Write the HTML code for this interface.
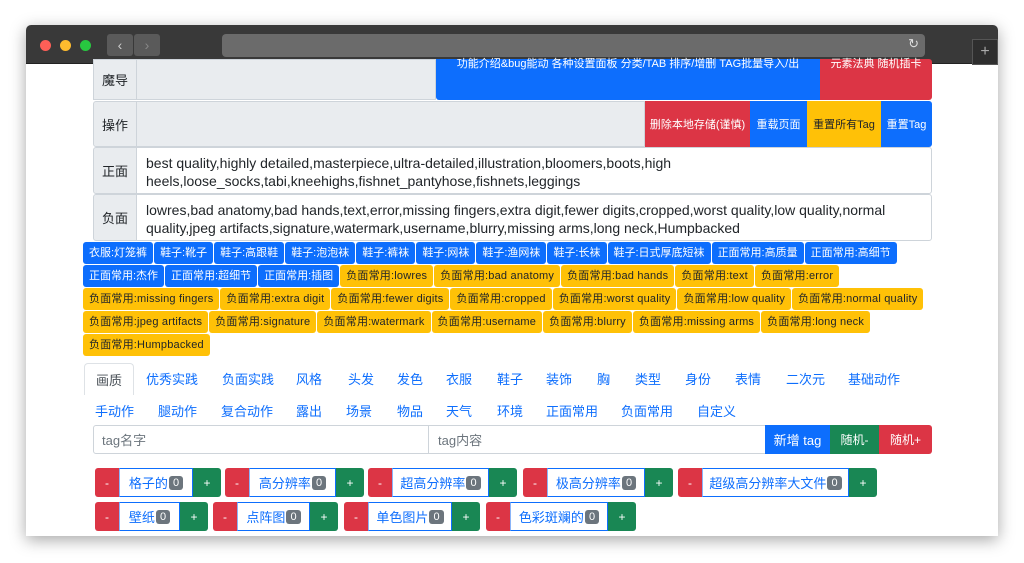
<!DOCTYPE html>
<html><head><meta charset="utf-8"><style>
*{box-sizing:border-box;margin:0;padding:0}
body{width:1024px;height:563px;background:#fff;font-family:"Liberation Sans","Noto Sans CJK SC",sans-serif;position:relative;overflow:hidden}
.win{position:absolute;left:26px;top:25px;width:972px;height:511px;background:#fff;box-shadow:0 4px 16px rgba(0,0,0,.35);border-radius:5px 5px 0 0;overflow:hidden}
.bar{position:absolute;left:0;top:0;width:972px;height:39px;background:#393939;border-bottom:1px solid #222}
.dot{position:absolute;top:15px;width:11px;height:11px;border-radius:50%}
.nb{position:absolute;top:9px;width:26px;height:22px;background:#5a5a5a;border-radius:3px;color:#ccc;font-size:14px;text-align:center;line-height:22px}
.url{position:absolute;left:196px;top:9px;width:703px;height:23px;background:#6b6b6b;border-radius:4px}
.c{position:absolute;left:0;top:40px;width:972px;height:471px}
.a{position:absolute}
.lab{position:absolute;background:#e9ecef;border:1px solid #ced4da;color:#212529;font-size:13px;display:flex;align-items:center;justify-content:center}
.ta{position:absolute;border:1px solid #ced4da;font-size:14px;color:#212529;padding:6px 9px;line-height:23px}
.btn{position:absolute;color:#fff;font-size:11px;display:flex;align-items:center;justify-content:center;white-space:nowrap}
.tags{position:absolute;left:57px;top:217px;width:850px;display:flex;flex-wrap:wrap}
.t{font-size:11px;height:22px;line-height:22px;padding:0 6px;margin:0 1px 1px 0;border-radius:3px;color:#fff;background:#0d6efd;white-space:nowrap}
.y{background:#ffc107;color:#212529;letter-spacing:.2px}
.tr span{position:absolute;white-space:nowrap;font-size:13px;color:#0d6efd}
.g{position:absolute;height:29px;display:flex}
.g .m{width:24px;background:#dc3545;color:#fff;font-size:12px;display:flex;align-items:center;justify-content:center;border-radius:3px 0 0 3px}
.g .p{width:28px;background:#198754;color:#fff;font-size:12px;display:flex;align-items:center;justify-content:center;border-radius:0 3px 3px 0}
.g .n{border:1px solid #0d6efd;border-left-color:#8ab4f8;color:#0d6efd;font-size:13px;display:flex;align-items:center;justify-content:center;background:#fff;white-space:nowrap}
.bd{background:#6c757d;color:#fff;font-size:11px;border-radius:3px;padding:1px 4px;margin-left:1px}
</style></head><body>
<div class="win">
<div class="bar">
<div class="dot" style="left:14px;background:#fe5f57"></div>
<div class="dot" style="left:34px;background:#febc2e"></div>
<div class="dot" style="left:54px;background:#28c840"></div>
<div class="nb" style="left:81px">&#8249;</div>
<div class="nb" style="left:108px;color:#888">&#8250;</div>
<div class="url"><span style="position:absolute;right:6px;top:2px;color:#ddd;font-size:13px">&#8635;</span></div>
<div style="position:absolute;left:946px;top:14px;width:26px;height:26px;background:#2e2e2e;border:1px solid #555;color:#aaa;font-size:16px;text-align:center;line-height:24px">+</div>
</div>
<div class="c">
<div class="lab" style="left:67px;top:-6px;width:44px;height:41px">魔导</div>
<div class="ta" style="left:110px;top:-6px;width:300px;height:41px;background:#e9ecef"></div>
<div class="btn" style="left:410px;top:-6px;width:384px;height:41px;background:#0d6efd;align-items:flex-start;justify-content:space-around;border-radius:0 0 0 3px;font-size:11px;line-height:10px">功能介绍&amp;bug能动 各种设置面板 分类/TAB 排序/增删 TAG批量导入/出</div>
<div class="btn" style="left:794px;top:-6px;width:112px;height:41px;background:#dc3545;align-items:flex-start;line-height:10px;border-radius:0 3px 3px 0">元素法典 随机插卡</div>
<div class="lab" style="left:67px;top:36px;width:44px;height:46px;border-radius:3px 0 0 3px">操作</div>
<div class="ta" style="left:110px;top:36px;width:509px;height:46px;background:#e9ecef"></div>
<div class="btn" style="left:619px;top:36px;width:105px;height:46px;background:#dc3545">删除本地存储(谨慎)</div>
<div class="btn" style="left:724px;top:36px;width:57px;height:46px;background:#0d6efd">重载页面</div>
<div class="btn" style="left:781px;top:36px;width:74px;height:46px;background:#ffc107;color:#212529">重置所有Tag</div>
<div class="btn" style="left:855px;top:36px;width:51px;height:46px;background:#0d6efd;border-radius:0 3px 3px 0">重置Tag</div>
<div class="lab" style="left:67px;top:82px;width:44px;height:47px;border-radius:3px 0 0 3px">正面</div>
<div class="ta" style="left:110px;top:82px;width:796px;height:47px;border-radius:0 3px 3px 0;padding:6px 9px;line-height:18px">best quality,highly detailed,masterpiece,ultra-detailed,illustration,bloomers,boots,high<br>heels,loose_socks,tabi,kneehighs,fishnet_pantyhose,fishnets,leggings</div>
<div class="lab" style="left:67px;top:129px;width:44px;height:47px;border-radius:3px 0 0 3px">负面</div>
<div class="ta" style="left:110px;top:129px;width:796px;height:47px;border-radius:0 3px 3px 0;padding:6px 9px;line-height:18px;white-space:nowrap">lowres,bad anatomy,bad hands,text,error,missing fingers,extra digit,fewer digits,cropped,worst quality,low quality,normal<br>quality,jpeg artifacts,signature,watermark,username,blurry,missing arms,long neck,Humpbacked</div>
<div class="tags" style="top:177px">
<span class="t">衣服:灯笼裤</span><span class="t">鞋子:靴子</span><span class="t">鞋子:高跟鞋</span><span class="t">鞋子:泡泡袜</span><span class="t">鞋子:裤袜</span><span class="t">鞋子:网袜</span><span class="t">鞋子:渔网袜</span><span class="t">鞋子:长袜</span><span class="t">鞋子:日式厚底短袜</span><span class="t">正面常用:高质量</span><span class="t">正面常用:高细节</span>
<span class="t">正面常用:杰作</span><span class="t">正面常用:超细节</span><span class="t">正面常用:插图</span><span class="t y">负面常用:lowres</span><span class="t y">负面常用:bad anatomy</span><span class="t y">负面常用:bad hands</span><span class="t y">负面常用:text</span><span class="t y">负面常用:error</span>
<span class="t y">负面常用:missing fingers</span><span class="t y">负面常用:extra digit</span><span class="t y">负面常用:fewer digits</span><span class="t y">负面常用:cropped</span><span class="t y">负面常用:worst quality</span><span class="t y">负面常用:low quality</span><span class="t y">负面常用:normal quality</span>
<span class="t y">负面常用:jpeg artifacts</span><span class="t y">负面常用:signature</span><span class="t y">负面常用:watermark</span><span class="t y">负面常用:username</span><span class="t y">负面常用:blurry</span><span class="t y">负面常用:missing arms</span><span class="t y">负面常用:long neck</span>
<span class="t y">负面常用:Humpbacked</span>
</div>
<div class="a" style="left:58px;top:298px;width:50px;height:32px;border:1px solid #dee2e6;border-bottom:none;border-radius:4px 4px 0 0;font-size:13px;color:#495057;padding:6px 0 0 11px">画质</div>
<div class="a tr" style="left:0;top:304px">
<span style="left:120px">优秀实践</span><span style="left:196px">负面实践</span><span style="left:270px">风格</span><span style="left:322px">头发</span><span style="left:371px">发色</span><span style="left:420px">衣服</span><span style="left:471px">鞋子</span><span style="left:520px">装饰</span><span style="left:571px">胸</span><span style="left:609px">类型</span><span style="left:659px">身份</span><span style="left:709px">表情</span><span style="left:760px">二次元</span><span style="left:822px">基础动作</span>
</div>
<div class="a tr" style="left:0;top:336px">
<span style="left:69px">手动作</span><span style="left:132px">腿动作</span><span style="left:195px">复合动作</span><span style="left:270px">露出</span><span style="left:320px">场景</span><span style="left:371px">物品</span><span style="left:420px">天气</span><span style="left:471px">环境</span><span style="left:520px">正面常用</span><span style="left:595px">负面常用</span><span style="left:671px">自定义</span>
</div>
<div class="a" style="left:67px;top:360px;width:336px;height:29px;border:1px solid #ced4da;border-radius:3px 0 0 3px;font-size:13px;color:#6c757d;padding:0 8px;display:flex;align-items:center">tag名字</div>
<div class="a" style="left:402px;top:360px;width:338px;height:29px;border:1px solid #ced4da;font-size:13px;color:#6c757d;padding:0 9px;display:flex;align-items:center">tag内容</div>
<div class="btn" style="left:739px;top:360px;width:65px;height:29px;background:#0d6efd;font-size:13px">新增 tag</div>
<div class="btn" style="left:804px;top:360px;width:49px;height:29px;background:#198754;font-size:12px">随机-</div>
<div class="btn" style="left:853px;top:360px;width:53px;height:29px;background:#dc3545;font-size:12px;border-radius:0 3px 3px 0">随机+</div>
<div class="g" style="left:69px;top:403px"><div class="m">-</div><div class="n" style="width:74px">格子的<span class="bd">0</span></div><div class="p">+</div></div>
<div class="g" style="left:199px;top:403px"><div class="m">-</div><div class="n" style="width:87px">高分辨率<span class="bd">0</span></div><div class="p">+</div></div>
<div class="g" style="left:342px;top:403px"><div class="m">-</div><div class="n" style="width:97px">超高分辨率<span class="bd">0</span></div><div class="p">+</div></div>
<div class="g" style="left:497px;top:403px"><div class="m">-</div><div class="n" style="width:98px">极高分辨率<span class="bd">0</span></div><div class="p">+</div></div>
<div class="g" style="left:652px;top:403px"><div class="m">-</div><div class="n" style="width:147px">超级高分辨率大文件<span class="bd">0</span></div><div class="p">+</div></div>
<div class="g" style="left:69px;top:437px"><div class="m">-</div><div class="n" style="width:61px">壁纸<span class="bd">0</span></div><div class="p">+</div></div>
<div class="g" style="left:187px;top:437px"><div class="m">-</div><div class="n" style="width:73px">点阵图<span class="bd">0</span></div><div class="p">+</div></div>
<div class="g" style="left:318px;top:437px"><div class="m">-</div><div class="n" style="width:84px">单色图片<span class="bd">0</span></div><div class="p">+</div></div>
<div class="g" style="left:460px;top:437px"><div class="m">-</div><div class="n" style="width:98px">色彩斑斓的<span class="bd">0</span></div><div class="p">+</div></div>
</div>
</div>
</body></html>
